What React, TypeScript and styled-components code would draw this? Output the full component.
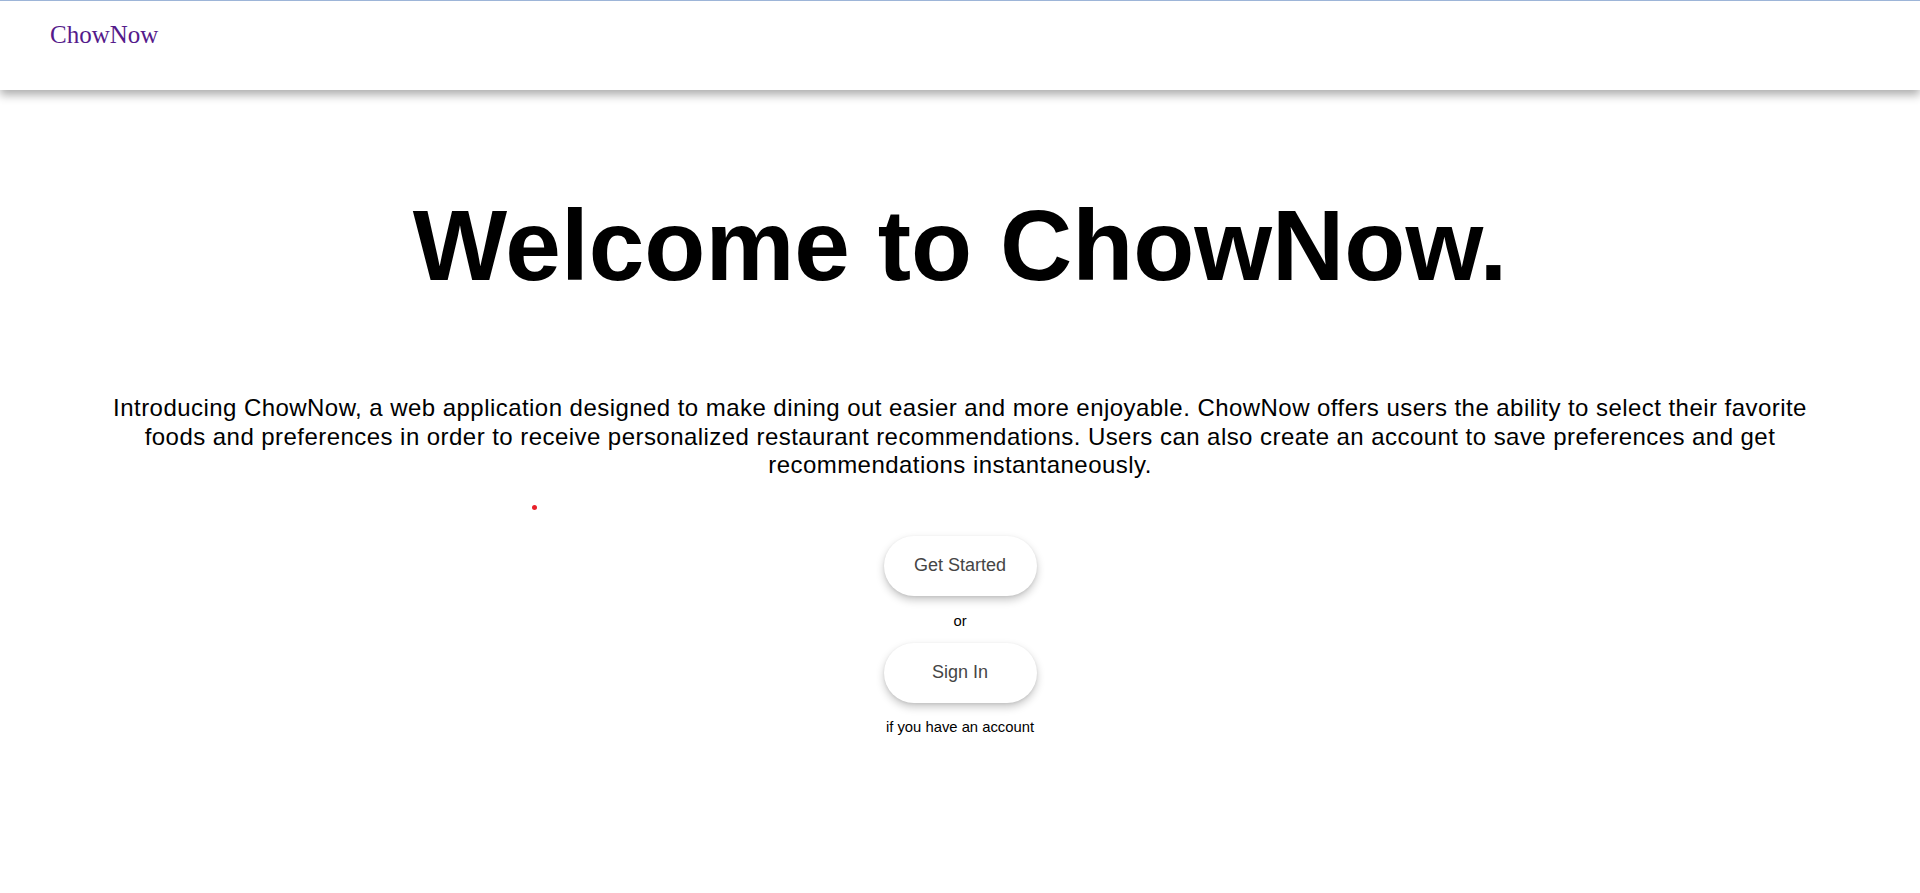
import React from "react";
import styled, { createGlobalStyle } from "styled-components";

const GlobalStyle = createGlobalStyle`
  html, body {
    margin: 0;
    padding: 0;
    background: #ffffff;
  }
  body {
    font-family: "Liberation Sans", Arial, sans-serif;
  }
`;

const Page = styled.div`
  position: relative;
  min-height: 893px;
  background: #ffffff;
`;

const NavBar = styled.header`
  box-sizing: border-box;
  height: 90px;
  border-top: 1px solid #9db5d8;
  padding: 20px 50px 0;
  background: #ffffff;
  box-shadow: 0 5px 9px rgba(0, 0, 0, 0.32);
  position: relative;
  z-index: 1;
`;

const Logo = styled.a`
  font-family: "Liberation Serif", "Times New Roman", serif;
  font-size: 25px;
  color: #551a8b;
  text-decoration: none;
`;

const Main = styled.main`
  display: flex;
  flex-direction: column;
  align-items: center;
  padding: 0 100px;
`;

const Headline = styled.h1`
  margin: 98px 0 0;
  font-family: "Liberation Sans", Arial, sans-serif;
  font-weight: 700;
  font-size: 100px;
  line-height: 114px;
  color: #000000;
  text-align: center;
`;

const Intro = styled.p`
  margin: 92px 0 0;
  font-family: "Liberation Sans", Arial, sans-serif;
  font-size: 24px;
  letter-spacing: 0.45px;
  line-height: 28.5px;
  color: #000000;
  text-align: center;
`;

const Actions = styled.div`
  display: flex;
  flex-direction: column;
  align-items: center;
  margin-top: 56px;
`;

const PillButton = styled.button`
  box-sizing: border-box;
  width: 153px;
  height: 60px;
  border: none;
  border-radius: 30px;
  background: #ffffff;
  color: #454545;
  font-family: "Liberation Sans", Arial, sans-serif;
  font-size: 18px;
  box-shadow: 0 4px 8px rgba(0, 0, 0, 0.22), 0 1px 3px rgba(0, 0, 0, 0.08);
  cursor: pointer;
`;

const Note = styled.span<{ $top: number; $bottom?: number }>`
  display: block;
  margin-top: ${(p) => p.$top}px;
  margin-bottom: ${(p) => p.$bottom ?? 0}px;
  font-family: "Liberation Sans", Arial, sans-serif;
  font-size: 14.8px;
  color: #000000;
`;

const Dot = styled.span`
  position: absolute;
  left: 532px;
  top: 505px;
  width: 5px;
  height: 5px;
  border-radius: 50%;
  background: #e8202a;
`;

export default function App() {
  return (
    <>
      <GlobalStyle />
      <Page>
        <NavBar>
          <Logo href="#">ChowNow</Logo>
        </NavBar>
        <Main>
          <Headline>Welcome to ChowNow.</Headline>
          <Intro>
            Introducing ChowNow, a web application designed to make dining out
            easier and more enjoyable. ChowNow offers users the ability to select
            their favorite foods and preferences in order to receive personalized
            restaurant recommendations. Users can also create an account to save
            preferences and get recommendations instantaneously.
          </Intro>
          <Actions>
            <PillButton>Get Started</PillButton>
            <Note $top={17} $bottom={14}>or</Note>
            <PillButton>Sign In</PillButton>
            <Note $top={16}>if you have an account</Note>
          </Actions>
        </Main>
        <Dot />
      </Page>
    </>
  );
}
